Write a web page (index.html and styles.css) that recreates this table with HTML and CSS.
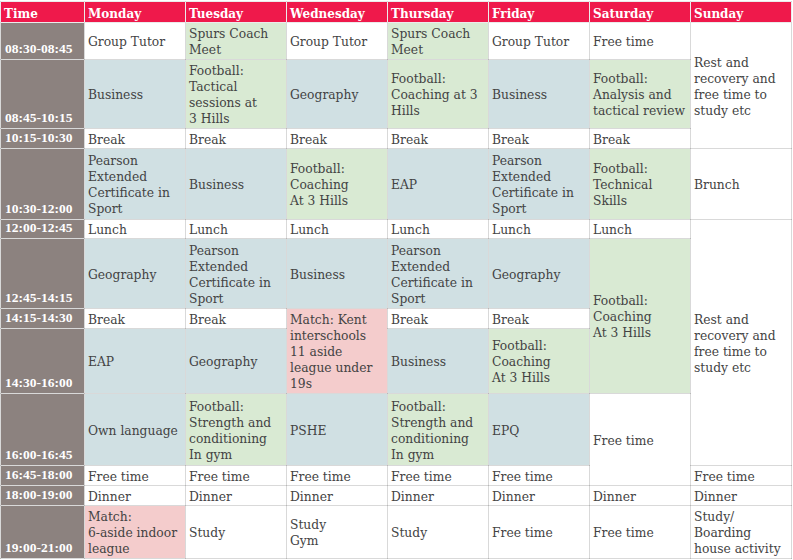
FILE: index.html
```html
<!DOCTYPE html>
<html>
<head>
<meta charset="utf-8">
<link rel="stylesheet" href="styles.css">
</head>
<body>
<div class="sheet">
<table class="tt">
<colgroup>
<col class="c-time"><col class="c-day"><col class="c-day"><col class="c-day"><col class="c-day"><col class="c-day"><col class="c-day"><col class="c-day">
</colgroup>
<tr class="r-head">
<th>Time</th><th>Monday</th><th>Tuesday</th><th>Wednesday</th><th>Thursday</th><th>Friday</th><th>Saturday</th><th>Sunday</th>
</tr>
<tr class="r1">
<td class="time">08:30-08:45</td>
<td>Group Tutor</td>
<td class="g">Spurs Coach<br>Meet</td>
<td>Group Tutor</td>
<td class="g">Spurs Coach<br>Meet</td>
<td>Group Tutor</td>
<td>Free time</td>
<td rowspan="3">Rest and<br>recovery and<br>free time to<br>study etc</td>
</tr>
<tr class="r2">
<td class="time">08:45-10:15</td>
<td class="b">Business</td>
<td class="g">Football:<br>Tactical<br>sessions at<br>3 Hills</td>
<td class="b">Geography</td>
<td class="g">Football:<br>Coaching at 3<br>Hills</td>
<td class="b">Business</td>
<td class="g">Football:<br>Analysis and<br>tactical review</td>
</tr>
<tr class="r3">
<td class="time">10:15-10:30</td>
<td>Break</td><td>Break</td><td>Break</td><td>Break</td><td>Break</td><td>Break</td>
</tr>
<tr class="r4">
<td class="time">10:30-12:00</td>
<td class="b">Pearson<br>Extended<br>Certificate in<br>Sport</td>
<td class="b">Business</td>
<td class="g">Football:<br>Coaching<br>At 3 Hills</td>
<td class="b">EAP</td>
<td class="b">Pearson<br>Extended<br>Certificate in<br>Sport</td>
<td class="g">Football:<br>Technical<br>Skills</td>
<td>Brunch</td>
</tr>
<tr class="r5">
<td class="time">12:00-12:45</td>
<td>Lunch</td><td>Lunch</td><td>Lunch</td><td>Lunch</td><td>Lunch</td><td>Lunch</td>
<td rowspan="5">Rest and<br>recovery and<br>free time to<br>study etc</td>
</tr>
<tr class="r6">
<td class="time">12:45-14:15</td>
<td class="b">Geography</td>
<td class="b">Pearson<br>Extended<br>Certificate in<br>Sport</td>
<td class="b">Business</td>
<td class="b">Pearson<br>Extended<br>Certificate in<br>Sport</td>
<td class="b">Geography</td>
<td class="g" rowspan="3">Football:<br>Coaching<br>At 3 Hills</td>
</tr>
<tr class="r7">
<td class="time">14:15-14:30</td>
<td>Break</td>
<td>Break</td>
<td class="p" rowspan="2">Match: Kent<br>interschools<br>11 aside<br>league under<br>19s</td>
<td>Break</td>
<td>Break</td>
</tr>
<tr class="r8">
<td class="time">14:30-16:00</td>
<td class="b">EAP</td>
<td class="b">Geography</td>
<td class="b">Business</td>
<td class="g">Football:<br>Coaching<br>At 3 Hills</td>
</tr>
<tr class="r9">
<td class="time">16:00-16:45</td>
<td class="b">Own language</td>
<td class="g">Football:<br>Strength and<br>conditioning<br>In gym</td>
<td class="b">PSHE</td>
<td class="g">Football:<br>Strength and<br>conditioning<br>In gym</td>
<td class="b">EPQ</td>
<td rowspan="2">Free time</td>
</tr>
<tr class="r10">
<td class="time">16:45-18:00</td>
<td>Free time</td><td>Free time</td><td>Free time</td><td>Free time</td><td>Free time</td>
<td>Free time</td>
</tr>
<tr class="r11">
<td class="time">18:00-19:00</td>
<td>Dinner</td><td>Dinner</td><td>Dinner</td><td>Dinner</td><td>Dinner</td><td>Dinner</td><td>Dinner</td>
</tr>
<tr class="r12">
<td class="time">19:00-21:00</td>
<td class="p">Match:<br>6-aside indoor<br>league</td>
<td>Study</td>
<td>Study<br>Gym</td>
<td>Study</td>
<td>Free time</td>
<td>Free time</td>
<td>Study/<br>Boarding<br>house activity</td>
</tr>
</table>
</div>
</body>
</html>
```
FILE: styles.css
```css
html, body {
  margin: 0;
  padding: 0;
  background: #ffffff;
}
.sheet {
  padding-top: 1px;
}
.tt {
  border-collapse: collapse;
  table-layout: fixed;
  width: 792px;
  font-family: "DejaVu Serif", "Liberation Serif", serif;
  font-size: 12.3px;
  line-height: 16px;
  color: #434343;
}
.c-time { width: 84px; }
.c-day { width: 101px; }
.tt th, .tt td {
  border: 1px solid rgba(0, 0, 0, 0.15);
  padding: 2px 3px 0 3px;
  vertical-align: middle;
  text-align: left;
  white-space: nowrap;
  overflow: hidden;
  background: #ffffff;
}
.tt th {
  background: #ef194b;
  color: #ffffff;
  font-weight: bold;
  font-size: 12px;
  padding-top: 3px;
  border-color: rgba(0, 0, 0, 0.08);
}
.tt td.time {
  background: #8c827f;
  color: #ffffff;
  font-family: "Liberation Serif", "DejaVu Serif", serif;
  font-weight: bold;
  font-size: 13.5px;
  vertical-align: bottom;
  padding: 0 2px 2px 4px;
}
.tt td.b { background: #d0e0e3; }
.tt td.g { background: #d9ead3; }
.tt td.p { background: #f4cccc; }
.r-head { height: 21px; }
.r1 { height: 37px; }
.r2 { height: 69px; }
.r3 { height: 20px; }
.r4 { height: 71px; }
.r5 { height: 19px; }
.r6 { height: 70px; }
.r7 { height: 20px; }
.r8 { height: 65px; }
.r9 { height: 72px; }
.r10 { height: 20px; }
.r11 { height: 20px; }
.r12 { height: 53px; }
```
